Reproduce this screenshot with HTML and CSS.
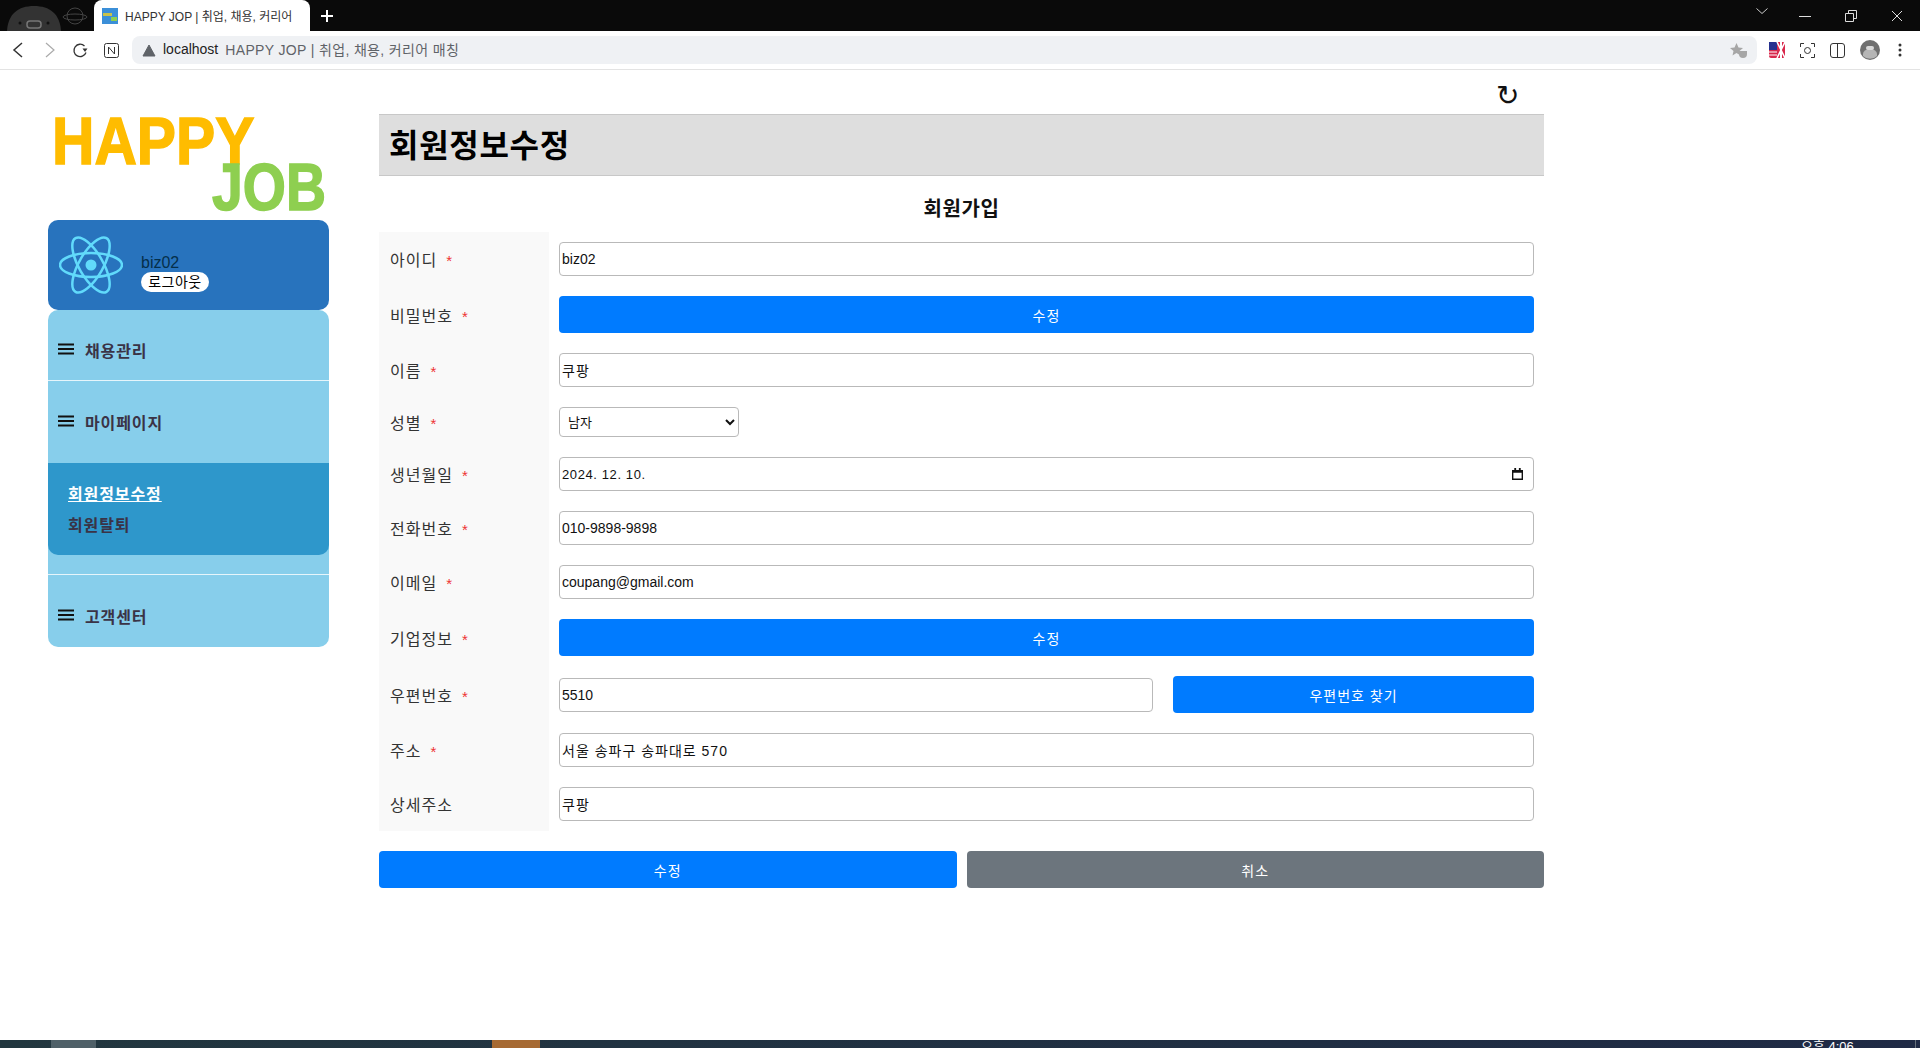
FILE: index.html
```html
<!DOCTYPE html>
<html lang="ko">
  <head>
    <meta charset="UTF-8" />
    <title>HAPPY JOP | 취업, 채용, 커리어 매칭</title>
    <link rel="stylesheet" href="styles.css">
  </head>

  <body>
    <div class="tabstrip">
      <div class="wallpaper">
        <svg width="94" height="31" viewBox="0 0 94 31">
          <path d="M7 31C8 14 18 6 34 6s26 8 27 25z" fill="#333" />
          <circle cx="20" cy="23" r="1.5" fill="#111" />
          <circle cx="48" cy="23" r="1.5" fill="#111" />
          <rect x="27" y="21" width="14" height="7" rx="3" fill="none" stroke="#777" stroke-width="1.500" />
          <circle cx="75" cy="16" r="8" fill="none" stroke="#444" />
          <ellipse cx="75" cy="17" rx="12" ry="3" fill="none" stroke="#444" />
        </svg>
      </div>
      <div class="tab">
        <svg class="favicon" width="16" height="16" viewBox="0 0 16 16">
          <rect width="16" height="16" fill="#3b8fd8" />
          <rect x="1" y="5" width="9" height="3" fill="#c9c24a" />
          <rect x="9" y="9" width="6" height="4" fill="#8ecf50" />
        </svg>
        <span class="tab-title">HAPPY JOP | 취업, 채용, 커리어</span>
      </div>
      <svg class="new-tab" width="12" height="12" viewBox="0 0 12 12">
        <path d="M6 0v12M0 6h12" stroke="#fff" stroke-width="2" />
      </svg>
      <div class="spacer"></div>
      <div class="window-btns">
        <svg class="tab-list" width="12" height="7" viewBox="0 0 12 7">
          <path d="M.5.5 6 5.500 11.500.5" fill="none" stroke="#ccc" />
        </svg>
        <svg width="12" height="12" viewBox="0 0 12 12">
          <path d="M0 6.500h12" stroke="#ddd" />
        </svg>
        <svg width="12" height="12" viewBox="0 0 12 12">
          <path d="M.5 3.500h8v8h-8zM3.500 3.500v-3h8v8h-3" fill="none" stroke="#ddd" />
        </svg>
        <svg width="12" height="12" viewBox="0 0 12 12">
          <path d="M1 1l10 10M11 1 1 11" stroke="#ddd" />
        </svg>
      </div>
    </div>

    <div class="toolbar">
      <div class="nav-btns">
        <svg width="12" height="16" viewBox="0 0 12 16">
          <path d="M10 1 2 8l8 7" fill="none" stroke="#333" stroke-width="1.500" />
        </svg>
        <svg width="12" height="16" viewBox="0 0 12 16">
          <path d="M2 1l8 7-8 7" fill="none" stroke="#aaa" stroke-width="1.200" />
        </svg>
        <svg class="nav-reload" width="16" height="16" viewBox="0 0 16 16">
          <path d="M14 10.500A6.200 6.200 0 1 1 12.500 4" fill="none" stroke="#333" stroke-width="1.300" />
          <path d="M10.500 6.500h5L13 10z" fill="#333" />
        </svg>
        <svg class="nav-notion" width="15" height="15" viewBox="0 0 15 15">
          <rect x=".5" y=".5" width="14" height="14" rx="2" fill="none" stroke="#333" />
          <path d="M4.500 11V4l6 7V4" fill="none" stroke="#333" />
        </svg>
      </div>
      <div class="address">
        <svg width="14" height="13" viewBox="0 0 14 13">
          <path d="M7 1l6 11H1z" fill="#5f6368" stroke="#5f6368" stroke-linejoin="round" />
        </svg>
        <span class="host">localhost</span>
        <span class="page-name">HAPPY JOP | 취업, 채용, 커리어 매칭</span>
        <svg class="star" width="17" height="15" viewBox="0 0 17 15">
          <path d="M6.500 0l2 4.500 4.500.5-3.500 3 1 4.500-4-2.500-4 2.500 1-4.500L0 5l4.500-.5z" fill="#a6a6a6" />
          <path d="M9 8h8v3a4 4 0 0 1-8 0z" fill="#a6a6a6" />
        </svg>
      </div>
      <div class="ext-btns">
        <svg width="16" height="16" viewBox="0 0 16 16">
          <rect width="16" height="16" rx="2" fill="#d8274b" />
          <rect width="8" height="8" fill="#27318f" />
          <path d="M0 10h8M0 13h8" stroke="#fff" />
          <path d="M8 0l8 16M16 0 8 16" stroke="#fff" stroke-width="1.500" />
          <rect x="11" width="2" height="16" fill="#fff" />
        </svg>
        <svg width="15" height="15" viewBox="0 0 15 15">
          <path d="M.5 4V.5H4M11 .5h3.500V4M14.500 11v3.500H11M4 14.500H.5V11" fill="none" stroke="#333" />
          <circle cx="7.500" cy="7.500" r="3" fill="none" stroke="#333" />
        </svg>
        <svg width="15" height="15" viewBox="0 0 15 15">
          <rect x=".5" y=".5" width="14" height="14" rx="2.500" fill="none" stroke="#333" />
          <path d="M7.500 .5v14" stroke="#333" />
        </svg>
        <svg width="20" height="20" viewBox="0 0 20 20">
          <circle cx="10" cy="10" r="10" fill="#6f6f6f" />
          <path d="M3 14a7 5 0 0 1 14 0v2a10 10 0 0 1-14 0z" fill="#b5b5b5" />
          <rect x="6" y="6" width="8" height="4" rx="2" fill="#d8d8d8" />
        </svg>
        <svg class="ext-menu" width="4" height="14" viewBox="0 0 4 14">
          <circle cx="2" cy="2" r="1.500" fill="#333" />
          <circle cx="2" cy="7" r="1.500" fill="#333" />
          <circle cx="2" cy="12" r="1.500" fill="#333" />
        </svg>
      </div>
    </div>

    <div class="page">
      <aside class="sidebar">
        <div class="logo">
          <span class="logo-happy">HAPPY</span>
          <span class="logo-job">JOB</span>
        </div>

        <div class="profile">
          <svg width="64" height="58" viewBox="-32 -29 64 58">
            <g fill="none" stroke="#61dafb" stroke-width="2.500">
              <ellipse rx="31" ry="12" />
              <ellipse rx="31" ry="12" transform="rotate(60)" />
              <ellipse rx="31" ry="12" transform="rotate(120)" />
            </g>
            <circle r="5.500" fill="#61dafb" />
          </svg>
          <div class="profile-info">
            <div class="profile-name">biz02</div>
            <button class="logout" type="button">로그아웃</button>
          </div>
        </div>

        <nav class="menu">
          <div class="menu-item menu-first">
            <svg class="bars" width="16" height="12" viewBox="0 0 16 12">
              <path d="M0 1.500h16M0 6h16M0 10.500h16" stroke="#111" stroke-width="2.200" />
            </svg>
            <span>채용관리</span>
          </div>
          <div class="menu-item menu-open">
            <svg class="bars" width="16" height="12" viewBox="0 0 16 12">
              <path d="M0 1.500h16M0 6h16M0 10.500h16" stroke="#111" stroke-width="2.200" />
            </svg>
            <span>마이페이지</span>
          </div>
          <ul class="submenu">
            <li class="active">회원정보수정</li>
            <li>회원탈퇴</li>
          </ul>
          <div class="menu-gap"></div>
          <div class="menu-item menu-last">
            <svg class="bars" width="16" height="12" viewBox="0 0 16 12">
              <path d="M0 1.500h16M0 6h16M0 10.500h16" stroke="#111" stroke-width="2.200" />
            </svg>
            <span>고객센터</span>
          </div>
        </nav>
      </aside>

      <main class="content">
        <div class="refresh-row"><span class="refresh">↻</span></div>
        <h1 class="page-title">회원정보수정</h1>
        <h2 class="form-title">회원가입</h2>

        <form class="form-table">
          <div class="row">
            <div class="row-label">아이디<em>*</em></div>
            <div class="row-field"><input class="field" type="text" value="biz02" /></div>
          </div>
          <div class="row">
            <div class="row-label">비밀번호<em>*</em></div>
            <div class="row-field"><button class="btn" type="button">수정</button></div>
          </div>
          <div class="row">
            <div class="row-label">이름<em>*</em></div>
            <div class="row-field"><input class="field field-ko" type="text" value="쿠팡" /></div>
          </div>
          <div class="row">
            <div class="row-label">성별<em>*</em></div>
            <div class="row-field">
              <select class="select">
                <option>남자</option>
                <option>여자</option>
              </select>
            </div>
          </div>
          <div class="row">
            <div class="row-label">생년월일<em>*</em></div>
            <div class="row-field">
              <div class="date-wrap">
                <input class="field date-text" type="text" value="2024. 12. 10." />
                <svg class="calendar" width="11" height="12" viewBox="0 0 12 13">
                  <path d="M0 2h12v11H0zM1.500 5v6.500h9V5zM2.500 0h2v2h-2zM7.500 0h2v2h-2z" fill="#111" fill-rule="evenodd" />
                </svg>
              </div>
            </div>
          </div>
          <div class="row">
            <div class="row-label">전화번호<em>*</em></div>
            <div class="row-field"><input class="field" type="text" value="010-9898-9898" /></div>
          </div>
          <div class="row">
            <div class="row-label">이메일<em>*</em></div>
            <div class="row-field"><input class="field" type="text" value="coupang@gmail.com" /></div>
          </div>
          <div class="row">
            <div class="row-label">기업정보<em>*</em></div>
            <div class="row-field"><button class="btn" type="button">수정</button></div>
          </div>
          <div class="row">
            <div class="row-label">우편번호<em>*</em></div>
            <div class="row-field zip-field">
              <input class="field zip-input" type="text" value="5510" />
              <button class="btn zip-btn" type="button">우편번호 찾기</button>
            </div>
          </div>
          <div class="row">
            <div class="row-label">주소<em>*</em></div>
            <div class="row-field"><input class="field field-ko" type="text" value="서울 송파구 송파대로 570" /></div>
          </div>
          <div class="row">
            <div class="row-label">상세주소</div>
            <div class="row-field"><input class="field field-ko" type="text" value="쿠팡" /></div>
          </div>
        </form>

        <div class="form-actions">
          <button class="btn" type="button">수정</button>
          <button class="btn btn-gray" type="button">취소</button>
        </div>
      </main>
    </div>

    <div class="taskbar">
      <div class="task-gray"></div>
      <div class="task-orange"></div>
      <div class="task-clock">오후 4:06</div>
      <div class="task-end"></div>
    </div>
  </body>
</html>
```

FILE: styles.css
```css
* {
  box-sizing: border-box;
}

html,
body {
  height: 100%;
}

body {
  margin: 0;
  display: flex;
  flex-direction: column;
  overflow: hidden;
  background-color: #fff;
  color: #111;
  font-family: "Liberation Sans", "Noto Sans CJK KR", sans-serif;
}

/* browser frame */
.tabstrip {
  height: 31px;
  flex: none;
  display: flex;
  align-items: center;
  background-color: #0a0a0a;
}

.wallpaper {
  width: 94px;
  height: 31px;
  flex: none;
}

.tab {
  width: 216px;
  height: 31px;
  padding-left: 8px;
  display: flex;
  align-items: center;
  gap: 7px;
  background-color: #fff;
  border-radius: 8px 8px 0 0;
  overflow: hidden;
}

.tab-title {
  font-size: 12px;
  color: #333;
  white-space: nowrap;
}

.new-tab {
  margin-left: 11px;
}

.spacer {
  flex: 1;
}

.window-btns {
  display: flex;
  align-items: center;
  gap: 34px;
  padding-right: 17px;
}

.tab-list {
  margin-top: -8px;
  margin-right: -3px;
}

.toolbar {
  height: 39px;
  flex: none;
  display: flex;
  align-items: center;
  background-color: #fff;
  border-bottom: 1px solid #e3e3e3;
  border-radius: 8px 8px 0 0;
}

.nav-btns {
  width: 132px;
  flex: none;
  padding-left: 12px;
  display: flex;
  align-items: center;
  gap: 20px;
}

.nav-reload,
.nav-notion {
  margin-left: -4px;
}

.address {
  width: 1625px;
  height: 28px;
  flex: none;
  padding: 0 10px;
  display: flex;
  align-items: center;
  gap: 7px;
  background-color: #eff1f4;
  border-radius: 8px;
  font-size: 14px;
}

.host {
  margin-top: -2px;
  color: #222;
}

.page-name {
  margin-top: -2px;
  color: #5f6368;
  letter-spacing: 0.35px;
}

.star {
  margin-left: auto;
}

.ext-btns {
  flex: 1;
  padding-left: 12px;
  display: flex;
  align-items: center;
  gap: 15px;
}

.ext-menu {
  margin-left: 3px;
}

/* page layout */
.page {
  flex: 1;
  display: flex;
  min-height: 0;
  padding-left: 48px;
}

.sidebar {
  width: 281px;
  flex: none;
}

.logo {
  width: 278px;
  height: 105px;
  margin-top: 45px;
  padding-left: 4px;
  display: flex;
  flex-direction: column;
  font-weight: bold;
  font-size: 66px;
  line-height: 52px;
  -webkit-text-stroke: 1.5px currentColor;
}

.logo-happy {
  display: block;
  color: #ffbc00;
  transform: scaleX(0.89);
  transform-origin: left top;
}

.logo-job {
  display: block;
  margin-top: -6px;
  padding-left: 160px;
  color: #8ecf50;
  transform: scaleX(0.84);
  transform-origin: 160px top;
}

.profile {
  height: 90px;
  padding-left: 11px;
  display: flex;
  align-items: center;
  gap: 18px;
  background-color: #2873bd;
  border-radius: 10px;
}

.profile-info {
  padding-top: 15px;
}

.profile-name {
  font-size: 16px;
  line-height: 18px;
  color: #052f4a;
}

.logout {
  display: block;
  width: 68px;
  height: 20px;
  padding: 0;
  border: none;
  border-radius: 10px;
  background-color: #fff;
  color: #000;
  font-family: inherit;
  font-size: 14px;
  line-height: 20px;
  letter-spacing: 0.5px;
}

.menu {
  background-color: #87ceeb;
  border-radius: 10px;
  overflow: hidden;
  color: #3a3346;
  font-size: 16px;
  font-weight: bold;
  letter-spacing: 0.9px;
}

.menu-item {
  padding-left: 10px;
  display: flex;
  align-items: center;
  gap: 11px;
}

.bars {
  margin-top: -3px;
}

.menu-first {
  height: 71px;
  padding-top: 10px;
  border-bottom: 1px solid #e6f5fb;
}

.menu-open {
  height: 82px;
}

.submenu {
  height: 92px;
  margin: 0;
  padding: 16px 0 0 20px;
  list-style: none;
  background-color: #2e97cb;
  border-radius: 0 0 10px 10px;
  line-height: 31px;
}

.submenu .active {
  color: #fff;
  text-decoration: underline;
}

.menu-gap {
  height: 20px;
  border-bottom: 1px solid #e6f5fb;
}

.menu-last {
  height: 72px;
  padding-top: 10px;
}

/* main content */
.content {
  width: 1165px;
  flex: none;
  margin-left: 50px;
}

.refresh-row {
  height: 44px;
  padding-right: 25px;
  display: flex;
  justify-content: flex-end;
  align-items: flex-start;
}

.refresh {
  padding-top: 4px;
  font-family: "DejaVu Sans", sans-serif;
  font-weight: lighter;
  font-size: 28px;
  line-height: 44px;
  color: #111;
}

.page-title {
  height: 62px;
  margin: 0;
  padding-left: 10px;
  background-color: #dedede;
  border: 1px solid #c8c8c8;
  border-width: 1px 0;
  font-size: 32px;
  line-height: 63px;
  letter-spacing: 0.7px;
  color: #000;
}

.form-title {
  height: 56px;
  margin: 0;
  text-align: center;
  font-size: 20px;
  line-height: 66px;
  letter-spacing: 0.6px;
  color: #111;
}

.row {
  display: flex;
}

.row-label {
  width: 170px;
  flex: none;
  padding-left: 11px;
  display: flex;
  align-items: center;
  background-color: #f9f9f9;
  font-size: 16px;
  color: #333;
  letter-spacing: 1px;
}

.row-label em {
  margin-left: 9px;
  padding-top: 3px;
  font-size: 15px;
  font-style: normal;
  color: #e33;
}

.row-field {
  flex: 1;
  padding: 10px;
  display: flex;
  align-items: center;
}

.field {
  width: 100%;
  height: 34px;
  padding: 0 2px;
  border: 1px solid #b9b9b9;
  border-radius: 4px;
  font-family: inherit;
  font-size: 14px;
  color: #111;
  background-color: #fff;
}

.field-ko {
  letter-spacing: 1px;
}

.select {
  width: 180px;
  height: 30px;
  padding-left: 4px;
  border: 1px solid #b9b9b9;
  border-radius: 4px;
  font-family: inherit;
  font-size: 13px;
  color: #111;
  background-color: #fff;
}

.date-wrap {
  width: 100%;
  display: flex;
  align-items: center;
}

.date-text {
  font-size: 13px;
  letter-spacing: 0.6px;
}

.calendar {
  flex: none;
  margin-left: -22px;
}

.btn {
  width: 100%;
  height: 37px;
  flex: 1;
  padding: 0;
  border: none;
  border-radius: 4px;
  background-color: #007bff;
  color: #fff;
  font-family: inherit;
  font-size: 14px;
  letter-spacing: 1px;
}

.btn-gray {
  background-color: #6c757d;
}

.zip-field {
  gap: 20px;
}

.zip-input {
  width: 594px;
  flex: none;
}

.form-actions {
  margin-top: 20px;
  display: flex;
  gap: 10px;
}

/* taskbar sliver at the bottom edge */
.taskbar {
  height: 8px;
  flex: none;
  display: flex;
  overflow: hidden;
  background: linear-gradient(90deg, #22373f, #1f2a45);
}

.task-gray {
  width: 45px;
  margin-left: 51px;
  background-color: #4f6068;
}

.task-orange {
  width: 48px;
  margin-left: 396px;
  background-color: #a66a33;
}

.task-clock {
  margin-left: 1261px;
  margin-top: -1px;
  color: #fff;
  font-size: 13px;
  line-height: 15px;
  white-space: nowrap;
}

.task-end {
  width: 5px;
  margin-left: auto;
  border-left: 1px solid #66707c;
}
```
